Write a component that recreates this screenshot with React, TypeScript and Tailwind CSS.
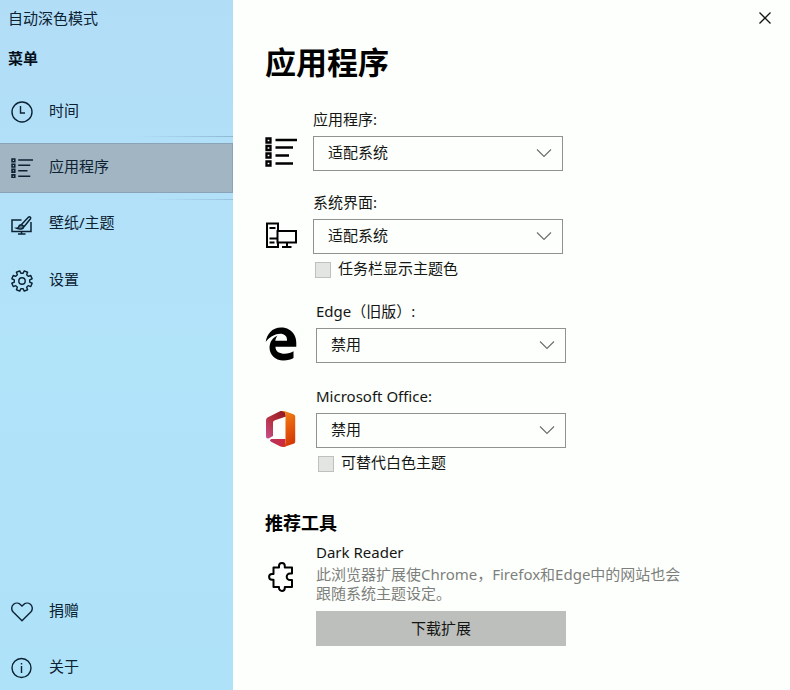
import React from "react";
import { FaEdgeLegacy } from "react-icons/fa";

type IconProps = Readonly<{ className?: string }>;

function ClockIcon({ className }: IconProps) {
  return (
    <svg viewBox="0 0 22 22" className={className} fill="none" stroke="currentColor" strokeWidth="1.4" aria-hidden="true">
      <circle cx="11" cy="11" r="10" />
      <path d="M9.500 5v7h4.500" />
    </svg>
  );
}

function ListIcon({ className }: IconProps) {
  return (
    <svg viewBox="0 0 32 30" className={className} fill="none" stroke="currentColor" strokeWidth="2.3" aria-hidden="true">
      <path d="M1.500 1.500h4v4h-4zM1.500 9h4v4h-4zM1.500 16.500h4v4h-4zM1.500 24.500h4v4h-4z" />
      <path d="M10.500 3H32M10.500 10.500H28M10.500 18.500H24M10.500 26.500H28" />
    </svg>
  );
}

function WallpaperIcon({ className }: IconProps) {
  return (
    <svg viewBox="0 -2 22 22" className={className} fill="none" stroke="currentColor" strokeWidth="1.5" aria-hidden="true">
      <path d="M10.500 5H1v11.500h19V7" />
      <path d="M10.500 16.500v2.500M7 19h7.500" />
      <path d="M10.500 9.500L17.600 2c1-.9 2.700.6 1.900 1.700L13 11.700" />
      <path d="M10 9.800c-1.700.1-2.200 1.200-2.400 2.200-.2.700-.8 1.200-1.800 1.300 2.700 1.200 6.500.9 6.900-1.300C12.800 11 11.400 9.900 10 9.800z" fill="currentColor" fillOpacity="0.5" />
    </svg>
  );
}

function gearPoint(radius: number, degrees: number) {
  const angle = (degrees * Math.PI) / 180;
  return `${(11 + radius * Math.cos(angle)).toFixed(2)} ${(11 + radius * Math.sin(angle)).toFixed(2)}`;
}

const gearPath =
  Array.from({ length: 8 }, (_, i) => {
    const a = i * 45 + 22.5;
    return `${i === 0 ? "M" : "L"}${gearPoint(7.8, a - 14)}L${gearPoint(10.4, a - 10)}L${gearPoint(10.4, a + 10)}L${gearPoint(7.8, a + 14)}`;
  }).join("") + "Z";

function GearIcon({ className }: IconProps) {
  return (
    <svg viewBox="0 0 22 22" className={className} fill="none" stroke="currentColor" strokeWidth="1.4" strokeLinejoin="round" aria-hidden="true">
      <path d={gearPath} />
      <circle cx="11" cy="11" r="3.2" />
    </svg>
  );
}

function HeartIcon({ className }: IconProps) {
  return (
    <svg viewBox="0 0 22 20" className={className} fill="none" stroke="currentColor" strokeWidth="1.4" aria-hidden="true">
      <path d="M11 18.800L2.200 10C-.2 7.400.6 3.900 2.600 2.300 5 .4 8 .9 9.600 2.700L11 4.100l1.400-1.400C14 .9 17 .4 19.400 2.300c2 1.600 2.800 5.100.4 7.700z" />
    </svg>
  );
}

function InfoIcon({ className }: IconProps) {
  return (
    <svg viewBox="0 0 22 22" className={className} fill="none" stroke="currentColor" strokeWidth="1.4" aria-hidden="true">
      <circle cx="10.500" cy="11" r="9.500" />
      <path d="M10.500 9v7M10.500 6v1.500" />
    </svg>
  );
}

function ComputerIcon({ className }: IconProps) {
  return (
    <svg viewBox="0 0 32 28" className={className} fill="none" stroke="currentColor" strokeWidth="2" aria-hidden="true">
      <path d="M13 9V2.500H2V26h11v-4" />
      <path d="M12.500 10H31v11.500H12.500z" />
      <path d="M4.500 7h6M4.500 17.500h8M4.500 21.500h5M22 21.500V26M17 26h9.500" />
    </svg>
  );
}

function OfficeIcon({ className }: IconProps) {
  return (
    <svg viewBox="0 0 30 36" className={className} aria-hidden="true">
      <defs>
        <linearGradient id="officeLeft" x1="1" y1="0" x2="0" y2="1">
          <stop offset="0" stopColor="#8e1620" />
          <stop offset="0.5" stopColor="#b4303c" />
          <stop offset="1" stopColor="#c8508f" />
        </linearGradient>
        <linearGradient id="officeRight" x1="0" y1="0" x2="0.3" y2="1">
          <stop offset="0" stopColor="#f08a1c" />
          <stop offset="0.5" stopColor="#e8600c" />
          <stop offset="1" stopColor="#d43c08" />
        </linearGradient>
        <linearGradient id="officeBottom" x1="0" y1="0" x2="1" y2="0">
          <stop offset="0" stopColor="#b83260" />
          <stop offset="1" stopColor="#d02a38" />
        </linearGradient>
      </defs>
      <path d="M5.500 28H19.500v7.500c-1.500.7-3.500.6-5 0L5.500 31c-1.800-1-1.800-2.700 0-3z" fill="url(#officeBottom)" />
      <path d="M0 9.500C0 8 .8 7 2 6.300L13.500.5C15-.1 17-.1 19 1l1 4.500L9 9.300C7.600 9.900 7 10.700 7 12v13L3 27.300C1.500 28 0 27.300 0 25.600z" fill="url(#officeLeft)" />
      <path d="M16 0c1-.1 2 0 3 .3l8.500 3c1.100.4 1.700 1.300 1.700 2.500v24.600c0 1.200-.6 2-1.700 2.400L18.500 35.700c-1 .3-2 .3-3 .2 2.500-.4 4-1.700 4-3.900V4C19.500 2 18.300.5 16 0z" fill="url(#officeRight)" />
    </svg>
  );
}

function PuzzleIcon({ className }: IconProps) {
  return (
    <svg viewBox="0 0 26 30" className={className} fill="none" stroke="currentColor" strokeWidth="2" strokeLinejoin="round" aria-hidden="true">
      <path d="M5.500 5.500H11V4a2.900 2.900 0 0 1 5.800 0v1.500H24v6h-2a3.300 3.300 0 0 0 0 6.600h2V25h-7.200v1a2.900 2.900 0 0 1-5.800 0v-1H5.500v-7.300H4a2.900 2.900 0 0 1 0-5.800h1.500z" />
    </svg>
  );
}

type NavItemProps = Readonly<{
  icon: React.ReactNode;
  label: string;
  className: string;
}>;

function NavItem({ icon, label, className }: NavItemProps) {
  return (
    <button type="button" className={`relative flex w-full items-center gap-4 pl-[11px] text-left ${className}`}>
      {icon}
      <span className="pb-1">{label}</span>
    </button>
  );
}

type SettingProps = Readonly<{
  id: string;
  label: string;
  icon: React.ReactNode;
  options: string[];
  checkLabel?: string;
  className: string;
}>;

function Setting({ id, label, icon, options, checkLabel, className }: SettingProps) {
  return (
    <div className={`grid ${className}`}>
      <label htmlFor={id} className="col-start-2 mb-[7px] h-5">
        {label}
      </label>
      <div className="col-start-1 flex h-8 items-center justify-center text-black">{icon}</div>
      <div className="relative col-start-2">
        <select id={id} className="h-[35px] w-full appearance-none border border-[#8f9390] bg-transparent pb-1 pl-3.5 outline-none">
          {options.map((option) => (
            <option key={option}>{option}</option>
          ))}
        </select>
        <svg viewBox="0 0 16 10" className="pointer-events-none absolute top-3 right-[11px] h-2.5 w-4" fill="none" stroke="#6a6d6b" strokeWidth="1.100" aria-hidden="true">
          <path d="M1 1.500l7 7 7-7" />
        </svg>
      </div>
      {checkLabel && (
        <label className="col-start-2 mt-1 ml-0.5 flex h-[22px] items-center gap-[7px]">
          <input type="checkbox" className="mt-0.5 size-4 appearance-none border border-[#bfc1bf] bg-[#e3e5e3] checked:bg-[#7d8a94]" />
          <span className="pb-0.5">{checkLabel}</span>
        </label>
      )}
    </div>
  );
}

export default function App() {
  return (
    <div className="flex min-h-screen bg-[#fdfffc] font-['Noto_Sans','Noto_Sans_CJK_SC',sans-serif] text-[15px] leading-5 text-[#141614]">
      <aside className="flex w-[233px] shrink-0 flex-col bg-linear-to-b from-[#b2ddf7] via-[#b1e3f9] to-[#aee2f8] text-[#0c2233]">
        <div className="flex h-9 items-center pl-2">自动深色模式</div>
        <h2 className="flex h-[44px] items-center pl-2 font-bold text-[#04101c]">菜单</h2>
        <nav className="flex flex-1 flex-col gap-1.5 pt-[7px]">
          <NavItem
            icon={<ClockIcon className="size-[22px]" />}
            label="时间"
            className="h-[50px] after:absolute after:right-0 after:bottom-0 after:h-px after:w-24 after:bg-linear-to-r after:from-transparent after:to-[#8fb9d3]"
          />
          <NavItem icon={<ListIcon className="w-[22px]" />} label="应用程序" className="h-[50px] border border-l-0 border-[#8ba3b6] bg-[#a2b5c3]" />
          <NavItem
            icon={<WallpaperIcon className="size-[22px]" />}
            label="壁纸/主题"
            className="h-[50px] after:absolute after:top-0 after:right-0 after:h-px after:w-20 after:bg-linear-to-r after:from-transparent after:to-[#98c3dc]"
          />
          <NavItem icon={<GearIcon className="size-[22px]" />} label="设置" className="h-[50px] pt-0.5" />
          <div className="mt-auto flex flex-col gap-2">
            <NavItem icon={<HeartIcon className="w-[22px]" />} label="捐赠" className="h-12 pt-1" />
            <NavItem icon={<InfoIcon className="size-[22px]" />} label="关于" className="h-12 pt-1" />
          </div>
        </nav>
      </aside>

      <main className="min-w-0 flex-1">
        <div className="flex h-9 justify-end">
          <button type="button" aria-label="关闭" className="flex w-[50px] items-center justify-center">
            <svg viewBox="0 0 12 12" className="size-3" fill="none" stroke="currentColor" strokeWidth="1.300" aria-hidden="true">
              <path d="M.5.500l11 11M11.500.5l-11 11" />
            </svg>
          </button>
        </div>
        <div className="pl-8">
          <h1 className="flex h-[52px] items-center text-[31px] font-bold text-black">应用程序</h1>
          <Setting
            id="apps"
            label="应用程序:"
            icon={<ListIcon className="w-8 shrink-0" />}
            options={["适配系统", "浅色", "深色"]}
            className="mt-[21px] grid-cols-[32px_250px] gap-x-4"
          />
          <Setting
            id="system"
            label="系统界面:"
            icon={<ComputerIcon className="w-8 shrink-0" />}
            options={["适配系统", "浅色", "深色"]}
            checkLabel="任务栏显示主题色"
            className="mt-[21px] grid-cols-[32px_250px] gap-x-4"
          />
          <Setting
            id="edge"
            label="Edge（旧版）:"
            icon={<FaEdgeLegacy className="size-[34px] shrink-0" />}
            options={["禁用", "适配系统"]}
            className="mt-[21px] grid-cols-[32px_250px] gap-x-[19px]"
          />
          <Setting
            id="office"
            label="Microsoft Office:"
            icon={<OfficeIcon className="w-[30px] shrink-0" />}
            options={["禁用", "适配系统"]}
            checkLabel="可替代白色主题"
            className="mt-[23px] grid-cols-[32px_250px] gap-x-[19px]"
          />
          <h2 className="mt-[39px] text-[18px] font-bold text-black">推荐工具</h2>
          <section className="mt-[9px] grid grid-cols-[32px_1fr] gap-x-[19px]">
            <h3 className="col-start-2">Dark Reader</h3>
            <PuzzleIcon className="h-[30px] w-[26px] justify-self-center text-black" />
            <p className="max-w-[374px] pt-[3px] pb-px leading-[19px] text-[#7d7f7d]">
              此浏览器扩展使Chrome，Firefox和Edge中的网站也会跟随系统主题设定。
            </p>
            <button type="button" className="col-start-2 mt-[7px] h-[35px] w-[250px] bg-[#bdbfbd] pb-0.5">
              下载扩展
            </button>
          </section>
        </div>
      </main>
    </div>
  );
}
